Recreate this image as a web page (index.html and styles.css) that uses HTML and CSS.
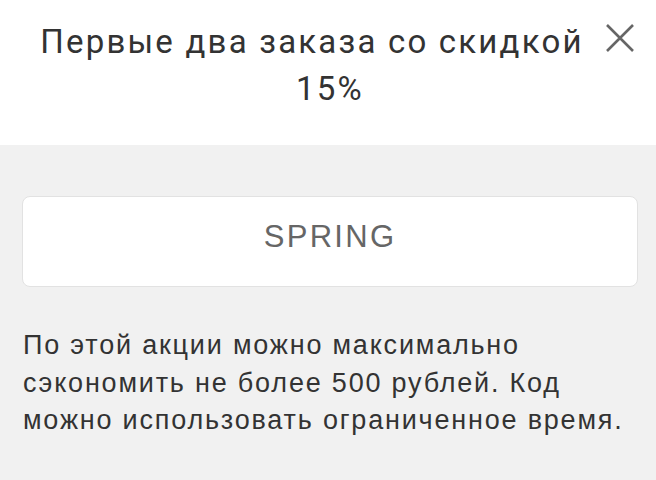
FILE: index.html
```html
<!DOCTYPE html>
<html>
  <head>
    <meta charset="utf-8" />
    <title>Промокод</title>
    <link rel="stylesheet" href="styles.css">
  </head>
  <body>
    <div class="sheet">
      <div class="head">
        <h1 class="title">Первые два заказа со скидкой 15%</h1>
        <button class="close" aria-label="Закрыть">
          <svg width="30" height="30" viewBox="0 0 30 30">
            <path d="M2 2 L28 28 M28 2 L2 28" stroke="#666" stroke-width="2.6" fill="none" />
          </svg>
        </button>
      </div>
      <div class="body">
        <div class="code">SPRING</div>
        <p class="note">По этой акции можно максимально сэкономить не более 500 рублей. Код можно использовать ограниченное время.</p>
      </div>
    </div>
  </body>
</html>
```

FILE: styles.css
```css
html, body {
  margin: 0;
  height: 100%;
}
body {
  background: #f1f1f1;
  font-family: "Liberation Sans", Arial, sans-serif;
  color: #333;
}
.sheet {
  display: flex;
  flex-direction: column;
  height: 100%;
}
.head {
  position: relative;
  background: #fff;
  padding: 18px 48px 33px 52px;
}
.title {
  margin: 0;
  font-family: Roboto, sans-serif;
  font-weight: 400;
  font-size: 33px;
  line-height: 47px;
  letter-spacing: 2.2px;
  text-indent: -36px;
  text-align: center;
  color: #333;
}
.close {
  position: absolute;
  top: 23px;
  right: 21px;
  width: 30px;
  height: 30px;
  padding: 0;
  border: 0;
  background: none;
}
.close svg {
  display: block;
}
.body {
  padding: 51px 18px 0 22px;
}
.code {
  background: #fff;
  border: 1px solid #e2e2e2;
  border-radius: 8px;
  padding: 21px 0 30px;
  font-size: 31px;
  line-height: 38px;
  letter-spacing: 2.3px;
  text-align: center;
  color: #666;
}
.note {
  margin: 40px 0 0;
  padding-left: 1px;
  font-size: 27px;
  line-height: 37.5px;
  letter-spacing: 1.8px;
  color: #333;
}
```
